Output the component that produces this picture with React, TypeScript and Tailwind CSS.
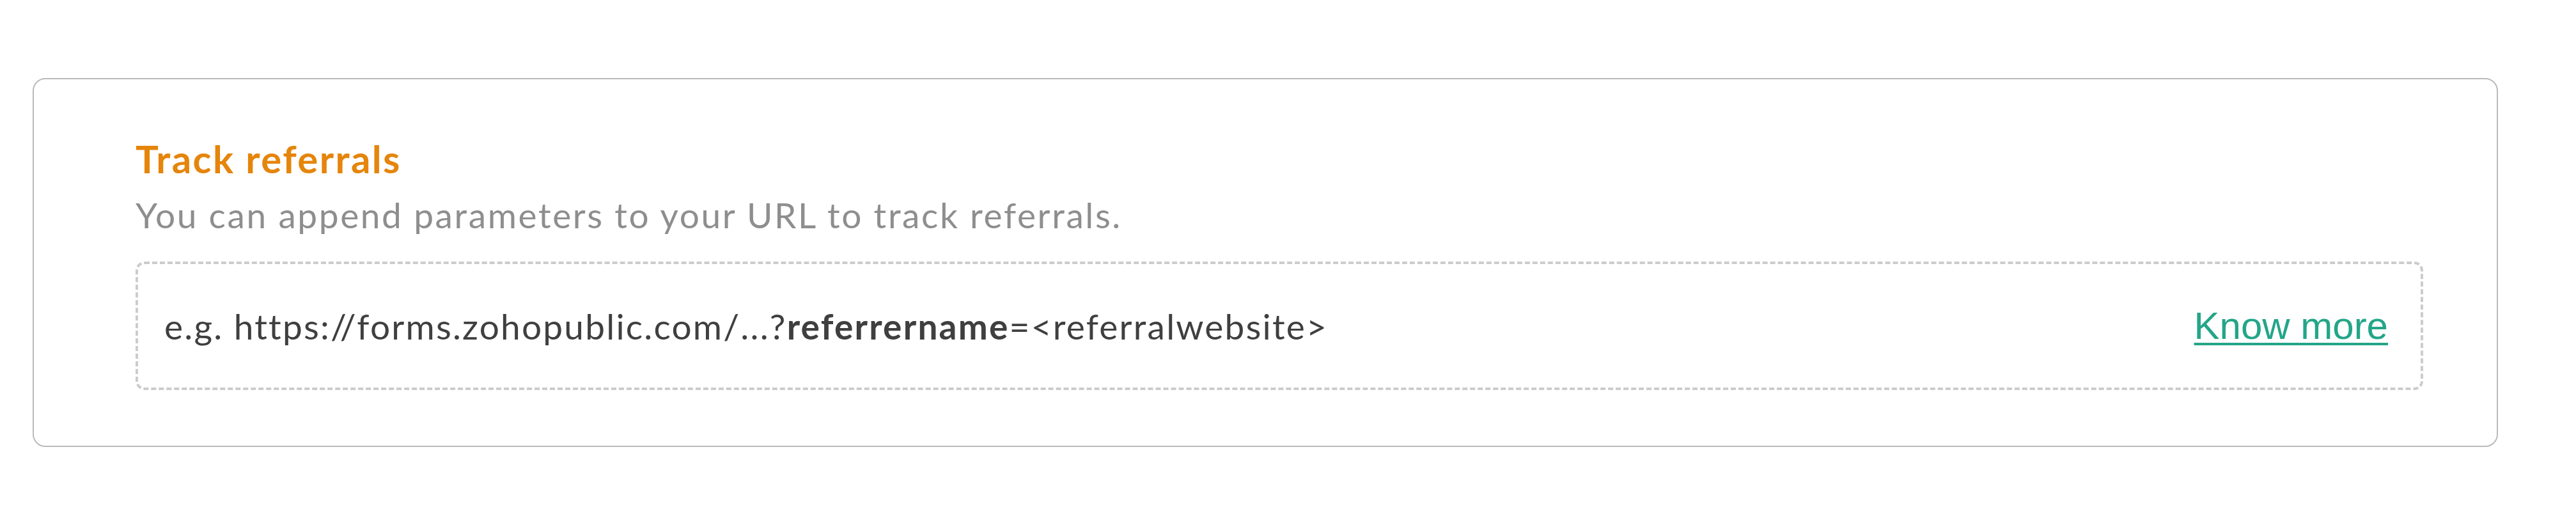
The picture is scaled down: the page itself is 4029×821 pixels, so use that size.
export default function App() {
  return (
    <div className="min-h-screen bg-white pl-[51px] pr-[122px] pt-[122px] font-['Lato',sans-serif]">
      {/* referral tracking card */}
      <section className="rounded-[20px] border-2 border-[#bababa] bg-white pb-[87px] pl-[159px] pr-[115px] pt-[88px]">
        <h2 className="text-[60px] font-bold leading-[72px] tracking-[2.4px] text-[#e5850b]">
          Track referrals
        </h2>
        <p className="mt-[19px] text-[55px] leading-[66px] tracking-[2.6px] text-[#8e8e8e]">
          You can append parameters to your URL to track referrals.
        </p>

        <div className="mt-[40px] flex h-[201px] items-center justify-between rounded-[14px] border-4 border-dashed border-[#cccccc] pl-[41px] pr-[51px]">
          <span className="text-[55px] leading-[66px] tracking-[2.2px] text-[#3f3f3f]">
            e.g. https://forms.zohopublic.com/...?
            <b className="font-bold">referrername</b>
            =&lt;referralwebsite&gt;
          </span>
          <a
            href="#"
            className="font-['Liberation_Sans',Arial,sans-serif] text-[60px] text-[#24a588] underline decoration-[4px] underline-offset-[6px]"
          >
            Know more
          </a>
        </div>
      </section>
    </div>
  );
}
